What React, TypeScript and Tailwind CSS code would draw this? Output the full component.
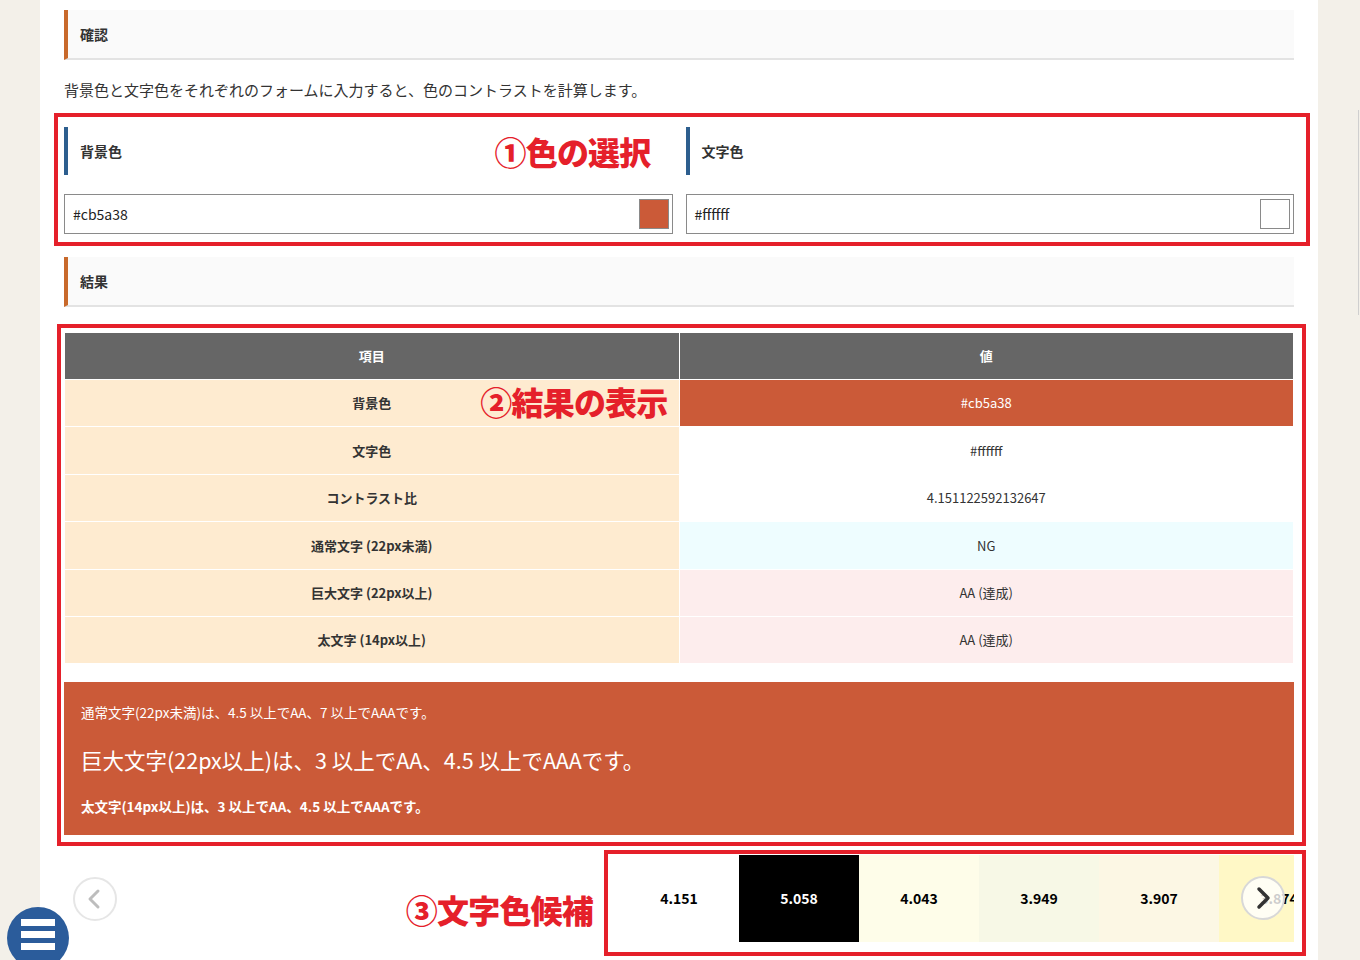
import React from 'react';

const rows = [
  { label: '背景色', value: '#cb5a38', cell: 'bg-[#cb5a38] text-white' },
  { label: '文字色', value: '#ffffff', cell: 'bg-white text-[#333]' },
  { label: 'コントラスト比', value: '4.151122592132647', cell: 'bg-white text-[#333]' },
  { label: '通常文字 (22px未満)', value: 'NG', cell: 'bg-[#eefdff] text-[#333]' },
  { label: '巨大文字 (22px以上)', value: 'AA (達成)', cell: 'bg-[#fdeded] text-[#333]' },
  { label: '太文字 (14px以上)', value: 'AA (達成)', cell: 'bg-[#fdeded] text-[#333]' },
];

const candidates = [
  { value: '4.151', cls: 'bg-white text-black' },
  { value: '5.058', cls: 'bg-black text-white' },
  { value: '4.043', cls: 'bg-[#fefde9] text-black' },
  { value: '3.949', cls: 'bg-[#f7f8e6] text-black' },
  { value: '3.907', cls: 'bg-[#fcf7e4] text-black' },
  { value: '3.874', cls: 'bg-[#fff8c6] text-black' },
];

const Heading = ({ children }: { children: React.ReactNode }) => (
  <div className="h-[50px] flex items-center bg-[#fafafa] border-l-4 border-l-[#c8692b] border-b-2 border-b-[#e3e3e3] pl-3 text-[14px] font-bold text-[#333]">
    {children}
  </div>
);

const Note = ({ children, className = '' }: { children: React.ReactNode; className?: string }) => (
  <span className={`text-[32px] leading-none font-black text-[#e5202a] tracking-tight ${className}`}>{children}</span>
);

const ColorField = ({ label, value, swatch, note }: { label: string; value: string; swatch: string; note?: string }) => (
  <div className="flex flex-col">
    <div className="h-[48px] flex items-center justify-between border-l-4 border-[#2d5e8e] pl-3 pr-[22px]">
      <span className="text-[14px] font-bold text-[#333]">{label}</span>
      {note && <Note>{note}</Note>}
    </div>
    <div className="mt-[19px] h-[40px] border border-[#8a8a8a] flex items-center justify-between pl-2 pr-[3px]">
      <span className="text-[14px] text-[#222]">{value}</span>
      <span className={`w-[30px] h-[30px] border border-[#8a8a8a] ${swatch}`} />
    </div>
  </div>
);

export default function App() {
  return (
    <div className="relative h-[960px] overflow-hidden bg-[#f3f0e9] font-['Noto_Sans_CJK_JP',sans-serif]">
      <div className="ml-[40px] w-[1278px] h-full bg-white px-6 pt-[10px]">
        <Heading>確認</Heading>
        <p className="mt-[19px] text-[15px] leading-[22px] text-[#333]">
          背景色と文字色をそれぞれのフォームに入力すると、色のコントラストを計算します。
        </p>

        {/* ① */}
        <div className="relative mt-[12px] pt-[14px] pb-[12px]">
          <div className="absolute top-0 bottom-0 -left-[10px] -right-[16px] border-4 border-[#e5202a] pointer-events-none" />
          <div className="grid grid-cols-2 gap-[13px]">
            <ColorField label="背景色" value="#cb5a38" swatch="bg-[#cb5a38]" note="①色の選択" />
            <ColorField label="文字色" value="#ffffff" swatch="bg-white" />
          </div>
        </div>

        <div className="mt-[11px]">
          <Heading>結果</Heading>
        </div>

        {/* ② */}
        <div className="relative mt-[17px] pt-[9px] pb-[11px]">
          <div className="absolute top-0 bottom-0 -left-[7px] -right-[12px] border-4 border-[#e5202a] pointer-events-none" />
          <div className="flex flex-col gap-px bg-white px-px">
            <div className="grid grid-cols-2 gap-px h-[46px] text-[13px] font-bold text-white">
              <div className="bg-[#666] flex items-center justify-center">項目</div>
              <div className="bg-[#666] flex items-center justify-center">値</div>
            </div>
            {rows.map((r, i) => (
              <div key={i} className="grid grid-cols-2 gap-px h-[46.4px] text-[13px]">
                <div className="relative bg-[#feebd0] flex items-center justify-center font-bold text-[#333]">
                  {r.label}
                  {i === 0 && <Note className="absolute right-[11px] top-[5px]">②結果の表示</Note>}
                </div>
                <div className={`flex items-center justify-center ${r.cell}`}>{r.value}</div>
              </div>
            ))}
          </div>
          <div className="mt-[19px] bg-[#cb5a38] text-white px-[17px] pt-5 pb-[19px] flex flex-col">
            <p className="text-[13.5px] leading-5">通常文字(22px未満)は、4.5 以上でAA、7 以上でAAAです。</p>
            <p className="mt-[22px] text-[21.5px] leading-8">巨大文字(22px以上)は、3 以上でAA、4.5 以上でAAAです。</p>
            <p className="mt-5 text-[13.5px] leading-5 font-bold">太文字(14px以上)は、3 以上でAA、4.5 以上でAAAです。</p>
          </div>
        </div>

        {/* ③ */}
        <div className="relative mt-[9px] h-[87px] flex">
          <div className="flex-1 flex items-center justify-between pl-[9px] pr-[26px]">
            <button className="w-[44px] h-[44px] rounded-full bg-white border-2 border-[#e6e6e6] flex items-center justify-center">
              <svg width="20" height="24" viewBox="0 0 20 24" fill="none" stroke="#bdbdbd" strokeWidth="3" strokeLinecap="round" strokeLinejoin="round">
                <path d="M13 4 5 12l8 8" />
              </svg>
            </button>
            <Note className="mt-[21px]">③文字色候補</Note>
          </div>
          <div className="relative w-[675px] overflow-hidden flex">
            {candidates.map((c, i) => (
              <div key={i} className={`w-[120px] shrink-0 flex items-center justify-center text-[14px] font-bold ${c.cls}`}>
                {c.value}
              </div>
            ))}
          </div>
          <div className="absolute top-0 bottom-[-14px] left-[540px] -right-[12px] border-4 border-[#e5202a] -mt-[5px] pointer-events-none" />
          <button className="absolute right-[9px] top-[21px] w-[44px] h-[44px] rounded-full bg-white/80 border-2 border-[#d8d8d8] flex items-center justify-center">
            <svg width="20" height="26" viewBox="0 0 20 26" fill="none" stroke="#333" strokeWidth="3.5" strokeLinecap="round" strokeLinejoin="round">
              <path d="M6 4l9 9-9 9" />
            </svg>
          </button>
        </div>
      </div>

      <div className="absolute left-[1358px] top-[110px] w-px h-[205px] bg-[#cfcfcf]" />

      <button className="fixed left-[7px] top-[907px] w-[62px] h-[62px] rounded-full bg-[#2b5c9b] flex flex-col items-center justify-center gap-[5px] pb-[8px]">
        <span className="block w-[34px] h-[7px] bg-white" />
        <span className="block w-[34px] h-[7px] bg-white" />
        <span className="block w-[34px] h-[7px] bg-white" />
      </button>
    </div>
  );
}
